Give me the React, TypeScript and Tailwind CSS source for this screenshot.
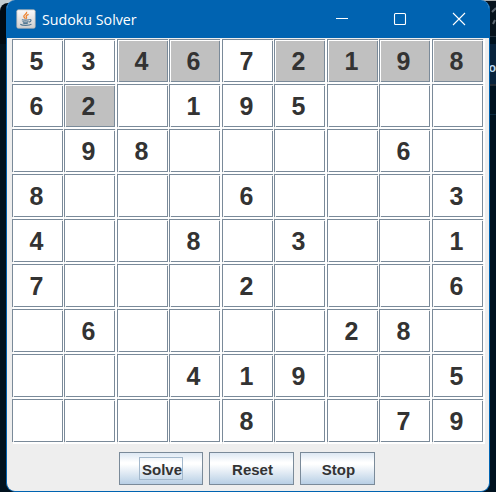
const rows: string[] = [
  '534672198',
  '62 195   ',
  ' 98    6 ',
  '8   6   3',
  '4  8 3  1',
  '7   2   6',
  ' 6    28 ',
  '   419  5',
  '    8  79',
];

const shaded = new Set([2, 3, 5, 6, 7, 8, 10]);

function Cell({ value, index }: { value: string; index: number }) {
  return (
    <div className="h-[45px] bg-white bg-[linear-gradient(#eee,#eee),linear-gradient(#eee,#eee)] bg-[size:1px_2px,1px_1px] bg-[position:0_43px,51px_0] bg-no-repeat">
      <div
        className={`relative flex h-[43px] w-[51px] items-center justify-center border border-[#7a8a99] pt-px pr-[2px] text-[25px] leading-none font-bold text-[#333] shadow-[inset_1px_1px_0_#fff] before:absolute before:-bottom-px before:left-0 before:size-px before:bg-[#eee] after:absolute after:top-0 after:-right-px after:size-px after:bg-[#eee] ${
          shaded.has(index) ? 'bg-[#c0c0c0]' : 'bg-white'
        }`}
      >
        {value.trim()}
      </div>
    </div>
  );
}

function JavaIcon() {
  return (
    <svg width="20" height="20" viewBox="0 0 20 20" fill="none">
      <defs>
        <linearGradient id="tile" x1="0" y1="0" x2="0" y2="1">
          <stop stopColor="#fafafa" />
          <stop offset="1" stopColor="#cfcfcf" />
        </linearGradient>
      </defs>
      <rect x=".8" y=".8" width="18.4" height="18.4" rx="1.5" fill="url(#tile)" stroke="#b9b5b0" strokeWidth=".7" />
      <path d="M10.600 2.800c1 2-3.300 3-2.800 4.700.2.900 1.200 1.300 1.500 2.300M12.600 5.300c-1.700.7-3 1.700-2.200 2.800.4.700.3 1.100-.3 1.700" stroke="#ed8431" strokeWidth="1.300" />
      <path d="M5.800 10.700c1.500.6 5.700.6 7.200 0M6.500 12.400c1.500.7 4.500.7 6 0M7 14c1.500.6 3.500.6 5 0M13.300 10.500c2.400-.5 2.400 2-.5 2.700M4.300 15.300c2 1.500 9.200 1.500 11.200-.2" stroke="#547993" strokeWidth="1.100" />
    </svg>
  );
}

const buttonClass =
  'flex h-[33px] items-center justify-center border border-[#7a8a99] bg-[linear-gradient(180deg,#dde8f3_0%,#fff_30%,#fff_36%,#b8cfe5_100%)] pt-px pl-[2px] text-[15px] leading-none font-bold text-[#333]';

export default function App() {
  return (
    <div className="flex h-[492px] w-[496px] overflow-hidden bg-[#00121f] font-['Liberation_Sans',Arial,sans-serif]">
      <div className="-mr-[8px] h-[44px] w-[14px] shrink-0 bg-[#c3cdd2]">
        <div className="mt-[3px] h-[41px] rounded-tl-[8px] bg-[#000a12]" />
      </div>

      <main className="z-10 flex w-[484px] shrink-0 flex-col overflow-hidden rounded-[9px] border border-t-0 border-[#0063b1] bg-[#eee]">
        <header className="flex h-[38px] shrink-0 items-center bg-[#0063b1] pl-[9px] text-white">
          <JavaIcon />
          <h1 className="ml-[6px] w-[97px] font-['Open_Sans',sans-serif] text-[15px] leading-5 font-normal whitespace-nowrap">
            <span className="inline-block origin-left scale-x-[.95]">Sudoku Solver</span>
          </h1>
          <svg className="ml-[196px]" width="140" height="20" viewBox="0 0 140 20" fill="none" stroke="currentColor" strokeWidth="1.100">
            <path d="M1 9.500h12M118 4l12 12M130 4l-12 12" />
            <rect x="59.500" y="4.500" width="11" height="11" rx="1" />
          </svg>
        </header>
        <section className="mt-px ml-[5px] grid w-[473px] grid-cols-[52px_53px_52px_53px_52px_53px_52px_53px_53px] bg-white">
          {rows.flatMap((row, r) =>
            row.split('').map((value, c) => <Cell key={r * 9 + c} index={r * 9 + c} value={value} />),
          )}
        </section>
        <footer className="mt-[8px] flex justify-center gap-[6px] pr-[2px]">
          <button className={`${buttonClass} w-[84px]`}>
            <span className="-mt-px -ml-[2px] flex h-[23px] w-[44px] items-center justify-center border border-[#a3b8cc] pt-px pl-[2px]">Solve</span>
          </button>
          <button className={`${buttonClass} w-[85px]`}>Reset</button>
          <button className={`${buttonClass} w-[75px]`}>Stop</button>
        </footer>
      </main>

      <aside className="-ml-[10px] flex w-[16px] shrink-0 flex-col text-right">
        <div className="flex h-[36px] justify-end border-t border-[#a8acad] bg-[#07131d] pt-[6px]">
          <svg width="5" height="18" viewBox="0 0 5 18" fill="none" stroke="#5c6671" strokeWidth="2">
            <path d="M1 5l4-4M2 17l2-4" />
          </svg>
        </div>
        <div className="h-px bg-[#263542]" />
        <div className="mt-[7px] flex h-[42px] items-center justify-end border-b-2 border-[#242c34] bg-[#08233c] pt-[8px] text-[12px] leading-none font-bold text-[#b9d6ec]">
          No
        </div>
        <div className="mt-[28px] h-px bg-[#0b2a40]" />
      </aside>
    </div>
  );
}
